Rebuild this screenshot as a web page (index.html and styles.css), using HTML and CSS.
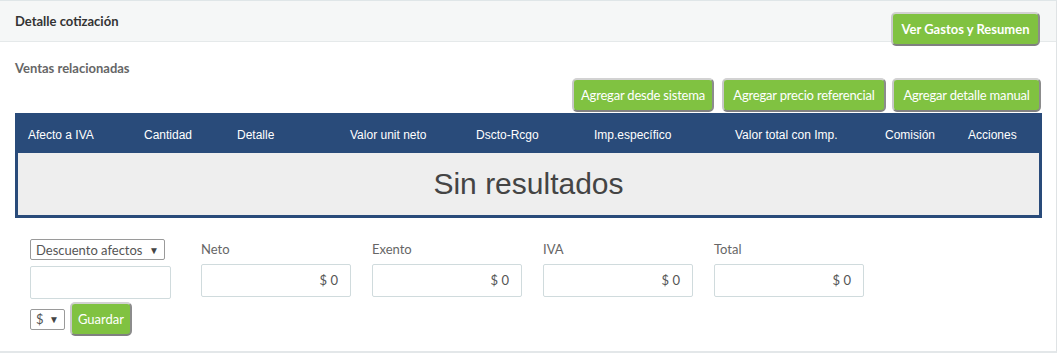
FILE: index.html
```html
<!DOCTYPE html>
<html lang="es">
<head>
<meta charset="UTF-8">
<meta name="viewport" content="width=device-width, initial-scale=1.0">
<title>Detalle cotización</title>
<link rel="stylesheet" href="styles.css">
</head>
<body>
<div class="panel">
  <div class="panel-heading">
    <span class="panel-title">Detalle cotización</span>
    <button class="btn btn-strong">Ver Gastos y Resumen</button>
  </div>
  <div class="panel-body">
    <div class="sub-title">Ventas relacionadas</div>
    <div class="actions">
      <button class="btn">Agregar desde sistema</button>
      <button class="btn">Agregar precio referencial</button>
      <button class="btn">Agregar detalle manual</button>
    </div>

    <div class="table">
      <div class="table-head">
        <div>Afecto a IVA</div>
        <div>Cantidad</div>
        <div>Detalle</div>
        <div>Valor unit neto</div>
        <div>Dscto-Rcgo</div>
        <div>Imp.específico</div>
        <div>Valor total con Imp.</div>
        <div>Comisión</div>
        <div>Acciones</div>
      </div>
      <div class="table-empty">Sin resultados</div>
    </div>

    <div class="totals">
      <div class="field discount">
        <div class="select wide"><span>Descuento afectos</span><span class="caret">&#9660;</span></div>
        <div class="input short"></div>
        <div class="save-row">
          <div class="select small"><span>$</span><span class="caret">&#9660;</span></div>
          <button class="btn btn-save">Guardar</button>
        </div>
      </div>
      <div class="field">
        <label>Neto</label>
        <div class="input">$ 0</div>
      </div>
      <div class="field">
        <label>Exento</label>
        <div class="input">$ 0</div>
      </div>
      <div class="field">
        <label>IVA</label>
        <div class="input">$ 0</div>
      </div>
      <div class="field">
        <label>Total</label>
        <div class="input">$ 0</div>
      </div>
    </div>
  </div>
</div>
</body>
</html>
```

FILE: styles.css
```css
body {
  margin: 0;
  background-color: #fff;
  font-family: Lato, "Liberation Sans", sans-serif;
  font-size: 13px;
  color: #333;
}

.panel {
  width: 1056px;
  height: 350px;
  border-top: 1px solid #dfe6e8;
  border-right: 1px solid #dfe3e5;
  border-bottom: 2px solid #e3e7e9;
}

.panel-heading {
  display: flex;
  justify-content: space-between;
  align-items: flex-start;
  height: 40px;
  padding: 0 15px;
  background-color: #f5f7f7;
  border-bottom: 1px solid #e5e9ea;
}

.panel-title {
  margin-top: 12px;
  font-weight: bold;
  color: #333;
  line-height: 16px;
}

.btn {
  height: 34px;
  padding: 0;
  background-color: #80c241;
  color: #fff;
  font-family: Lato, "Liberation Sans", sans-serif;
  font-size: 13px;
  white-space: nowrap;
  border: 2px solid;
  border-color: #d2d2d2 #8c8c8c #808080 #c8c8c8;
  border-radius: 5px;
  cursor: pointer;
}

.btn-strong {
  margin-top: 11px;
  margin-right: 1px;
  width: 149px;
  font-weight: bold;
}

.panel-body {
  padding: 0 14px 0 15px;
}

.sub-title {
  margin-top: 18px;
  line-height: 16px;
  font-weight: bold;
  color: #666;
}

.actions {
  display: flex;
  justify-content: flex-end;
  gap: 6px;
  margin-top: 2px;
  margin-bottom: 1px;
  padding-right: 1px;
}

.actions .btn {
  letter-spacing: -0.2px;
}

.actions .btn:nth-child(1) { width: 142px; margin-right: 2px; }
.actions .btn:nth-child(2) { width: 164px; }
.actions .btn:nth-child(3) { width: 149px; }

.table {
  width: 1021px;
  border: 3px solid #294b7a;
  font-family: "Liberation Sans", Arial, sans-serif;
}

.table-head {
  display: grid;
  grid-template-columns: 116px 93px 113px 126px 118px 141px 150px 83px 81px;
  height: 37px;
  align-items: center;
  background-color: #294b7a;
  color: #fff;
  font-size: 12px;
}

.table-head div {
  padding-left: 10px;
}

.table-empty {
  height: 62px;
  line-height: 62px;
  text-align: center;
  background-color: #eee;
  font-size: 30px;
  color: #444;
}

.totals {
  display: grid;
  grid-template-columns: repeat(5, 171px);
  margin-top: 21px;
  padding-left: 15px;
}

.field label {
  display: block;
  height: 18px;
  margin-top: 1px;
  margin-bottom: 6px;
  color: #666;
  line-height: 18px;
}

.input {
  box-sizing: border-box;
  width: 150px;
  height: 33px;
  padding: 0 12px;
  border: 1px solid #d0dbdd;
  border-radius: 2px;
  text-align: right;
  line-height: 31px;
  color: #555;
}

.input.short {
  width: 141px;
  margin-top: 6px;
}

.select {
  box-sizing: border-box;
  display: flex;
  justify-content: space-between;
  align-items: center;
  height: 21px;
  padding: 0 5px 0 5px;
  border: 1px solid #9a9a9a;
  border-radius: 2px;
  color: #555;
}

.select.wide {
  width: 135px;
}

.select.small {
  width: 35px;
}

.caret {
  font-size: 10px;
  color: #444;
}

.save-row {
  display: flex;
  align-items: center;
  gap: 5px;
  margin-top: 3px;
}

.btn-save {
  width: 62px;
}
```
